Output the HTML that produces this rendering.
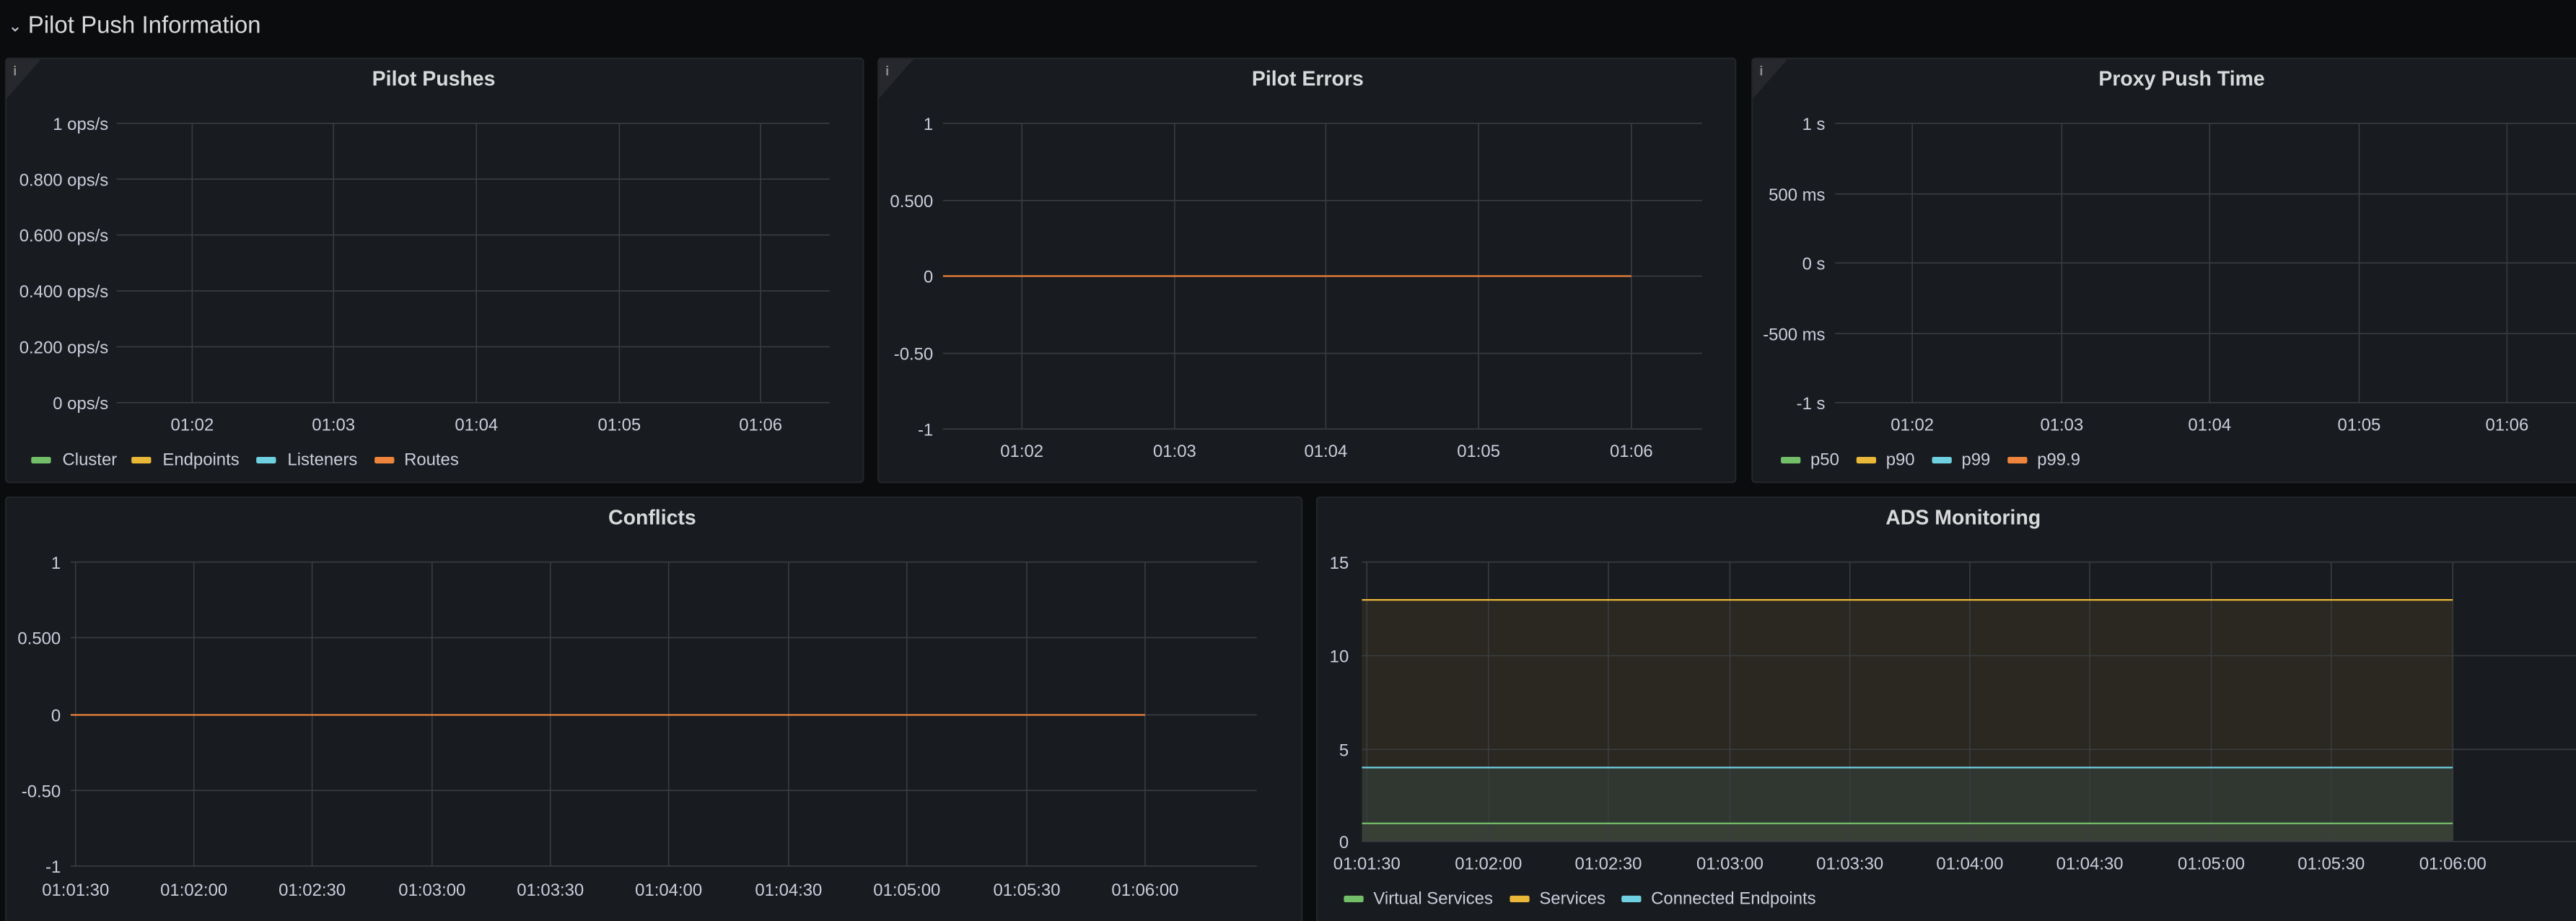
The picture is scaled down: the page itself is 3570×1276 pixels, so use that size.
<!DOCTYPE html>
<html><head><meta charset="utf-8"><style>
html,body{margin:0;padding:0;background:#0b0c0e;width:3570px;height:1276px;overflow:hidden}
svg{display:block}
text{font-family:"Liberation Sans",sans-serif;fill:#ccccdc}
.t{font-size:12.5px;font-weight:bold;text-anchor:middle;fill:#d8d9da}
.y{font-size:10.5px;text-anchor:end}
.x{font-size:10.5px;text-anchor:middle}
.l{font-size:10.5px}
.g line{stroke:#3a3c41;stroke-width:0.7}
.p{fill:#181b1f;stroke:#25272c;stroke-width:0.8}
</style></head><body>
<svg width="3570" height="1276" viewBox="0 0 1568 560.4" preserveAspectRatio="none">
<rect width="1568" height="560.4" fill="#0b0c0e"/>
<text x="5" y="19" style="font-size:10px">⌄</text>
<text x="17" y="20" style="font-size:14.5px;fill:#d8d9da">Pilot Push Information</text>

<!-- Panel 1 -->
<rect class="p" x="3.5" y="35.5" width="522" height="258" rx="2"/>
<path d="M4 36 L25 36 L4 60 Z" fill="#26282d"/>
<text x="8" y="46" style="font-size:8px;fill:#8e8e8e;font-weight:bold">i</text>
<text class="t" x="264" y="52">Pilot Pushes</text>
<g class="g">
<line x1="71" y1="75" x2="505" y2="75"/><line x1="71" y1="109" x2="505" y2="109"/><line x1="71" y1="143" x2="505" y2="143"/><line x1="71" y1="177" x2="505" y2="177"/><line x1="71" y1="211" x2="505" y2="211"/><line x1="71" y1="245" x2="505" y2="245"/>
<line x1="117" y1="75" x2="117" y2="245"/><line x1="203" y1="75" x2="203" y2="245"/><line x1="290" y1="75" x2="290" y2="245"/><line x1="377" y1="75" x2="377" y2="245"/><line x1="463" y1="75" x2="463" y2="245"/>
</g>
<text class="y" x="66" y="79">1 ops/s</text><text class="y" x="66" y="113">0.800 ops/s</text><text class="y" x="66" y="147">0.600 ops/s</text><text class="y" x="66" y="181">0.400 ops/s</text><text class="y" x="66" y="215">0.200 ops/s</text><text class="y" x="66" y="249">0 ops/s</text>
<text class="x" x="117" y="262">01:02</text><text class="x" x="203" y="262">01:03</text><text class="x" x="290" y="262">01:04</text><text class="x" x="377" y="262">01:05</text><text class="x" x="463" y="262">01:06</text>
<rect x="19" y="278" width="12" height="4" rx="1" fill="#73bf69"/><text class="l" x="38" y="283">Cluster</text>
<rect x="80" y="278" width="12" height="4" rx="1" fill="#eab839"/><text class="l" x="99" y="283">Endpoints</text>
<rect x="156" y="278" width="12" height="4" rx="1" fill="#6ed0e0"/><text class="l" x="175" y="283">Listeners</text>
<rect x="228" y="278" width="12" height="4" rx="1" fill="#ef843c"/><text class="l" x="246" y="283">Routes</text>

<!-- Panel 2 -->
<rect class="p" x="534.5" y="35.5" width="522" height="258" rx="2"/>
<path d="M535 36 L556 36 L535 60 Z" fill="#26282d"/>
<text x="539" y="46" style="font-size:8px;fill:#8e8e8e;font-weight:bold">i</text>
<text class="t" x="796" y="52">Pilot Errors</text>
<g class="g">
<line x1="574" y1="75" x2="1036" y2="75"/><line x1="574" y1="122" x2="1036" y2="122"/><line x1="574" y1="168" x2="1036" y2="168"/><line x1="574" y1="215" x2="1036" y2="215"/><line x1="574" y1="261" x2="1036" y2="261"/>
<line x1="622" y1="75" x2="622" y2="261"/><line x1="715" y1="75" x2="715" y2="261"/><line x1="807" y1="75" x2="807" y2="261"/><line x1="900" y1="75" x2="900" y2="261"/><line x1="993" y1="75" x2="993" y2="261"/>
</g>
<line x1="574" y1="168" x2="993" y2="168" stroke="#ef843c" stroke-width="1"/>
<text class="y" x="568" y="79">1</text><text class="y" x="568" y="126">0.500</text><text class="y" x="568" y="172">0</text><text class="y" x="568" y="219">-0.50</text><text class="y" x="568" y="265">-1</text>
<text class="x" x="622" y="278">01:02</text><text class="x" x="715" y="278">01:03</text><text class="x" x="807" y="278">01:04</text><text class="x" x="900" y="278">01:05</text><text class="x" x="993" y="278">01:06</text>

<!-- Panel 3 -->
<rect class="p" x="1066.5" y="35.5" width="510" height="258" rx="2"/>
<path d="M1067 36 L1088 36 L1067 60 Z" fill="#26282d"/>
<text x="1071" y="46" style="font-size:8px;fill:#8e8e8e;font-weight:bold">i</text>
<text class="t" x="1328" y="52">Proxy Push Time</text>
<g class="g">
<line x1="1117" y1="75" x2="1568" y2="75"/><line x1="1117" y1="118" x2="1568" y2="118"/><line x1="1117" y1="160" x2="1568" y2="160"/><line x1="1117" y1="203" x2="1568" y2="203"/><line x1="1117" y1="245" x2="1568" y2="245"/>
<line x1="1164" y1="75" x2="1164" y2="245"/><line x1="1255" y1="75" x2="1255" y2="245"/><line x1="1345" y1="75" x2="1345" y2="245"/><line x1="1436" y1="75" x2="1436" y2="245"/><line x1="1526" y1="75" x2="1526" y2="245"/>
</g>
<text class="y" x="1111" y="79">1 s</text><text class="y" x="1111" y="122">500 ms</text><text class="y" x="1111" y="164">0 s</text><text class="y" x="1111" y="207">-500 ms</text><text class="y" x="1111" y="249">-1 s</text>
<text class="x" x="1164" y="262">01:02</text><text class="x" x="1255" y="262">01:03</text><text class="x" x="1345" y="262">01:04</text><text class="x" x="1436" y="262">01:05</text><text class="x" x="1526" y="262">01:06</text>
<rect x="1084" y="278" width="12" height="4" rx="1" fill="#73bf69"/><text class="l" x="1102" y="283">p50</text>
<rect x="1130" y="278" width="12" height="4" rx="1" fill="#eab839"/><text class="l" x="1148" y="283">p90</text>
<rect x="1176" y="278" width="12" height="4" rx="1" fill="#6ed0e0"/><text class="l" x="1194" y="283">p99</text>
<rect x="1222" y="278" width="12" height="4" rx="1" fill="#ef843c"/><text class="l" x="1240" y="283">p99.9</text>

<!-- Conflicts -->
<rect class="p" x="3.5" y="302.5" width="789" height="262" rx="2"/>
<text class="t" x="397" y="319">Conflicts</text>
<g class="g">
<line x1="43" y1="342" x2="765" y2="342"/><line x1="43" y1="388" x2="765" y2="388"/><line x1="43" y1="435" x2="765" y2="435"/><line x1="43" y1="481" x2="765" y2="481"/><line x1="43" y1="527" x2="765" y2="527"/>
<line x1="46" y1="342" x2="46" y2="527"/><line x1="118" y1="342" x2="118" y2="527"/><line x1="190" y1="342" x2="190" y2="527"/><line x1="263" y1="342" x2="263" y2="527"/><line x1="335" y1="342" x2="335" y2="527"/><line x1="407" y1="342" x2="407" y2="527"/><line x1="480" y1="342" x2="480" y2="527"/><line x1="552" y1="342" x2="552" y2="527"/><line x1="625" y1="342" x2="625" y2="527"/><line x1="697" y1="342" x2="697" y2="527"/>
</g>
<line x1="43" y1="435" x2="697" y2="435" stroke="#ef843c" stroke-width="1"/>
<text class="y" x="37" y="346">1</text><text class="y" x="37" y="392">0.500</text><text class="y" x="37" y="439">0</text><text class="y" x="37" y="485">-0.50</text><text class="y" x="37" y="531">-1</text>
<text class="x" x="46" y="545">01:01:30</text><text class="x" x="118" y="545">01:02:00</text><text class="x" x="190" y="545">01:02:30</text><text class="x" x="263" y="545">01:03:00</text><text class="x" x="335" y="545">01:03:30</text><text class="x" x="407" y="545">01:04:00</text><text class="x" x="480" y="545">01:04:30</text><text class="x" x="552" y="545">01:05:00</text><text class="x" x="625" y="545">01:05:30</text><text class="x" x="697" y="545">01:06:00</text>

<!-- ADS -->
<rect class="p" x="801.5" y="302.5" width="780" height="262" rx="2"/>
<text class="t" x="1195" y="319">ADS Monitoring</text>
<rect x="829" y="365" width="664" height="102" fill="#2a2820"/>
<rect x="829" y="467" width="664" height="34" fill="#303731"/>
<rect x="829" y="501" width="664" height="11" fill="#384036"/>
<g class="g">
<line x1="829" y1="342" x2="1568" y2="342"/><line x1="829" y1="399" x2="1568" y2="399"/><line x1="829" y1="456" x2="1568" y2="456"/><line x1="829" y1="512" x2="1568" y2="512"/>
<line x1="832" y1="342" x2="832" y2="512"/><line x1="906" y1="342" x2="906" y2="512"/><line x1="979" y1="342" x2="979" y2="512"/><line x1="1053" y1="342" x2="1053" y2="512"/><line x1="1126" y1="342" x2="1126" y2="512"/><line x1="1199" y1="342" x2="1199" y2="512"/><line x1="1272" y1="342" x2="1272" y2="512"/><line x1="1346" y1="342" x2="1346" y2="512"/><line x1="1419" y1="342" x2="1419" y2="512"/><line x1="1493" y1="342" x2="1493" y2="512"/>
</g>
<line x1="829" y1="365" x2="1493" y2="365" stroke="#eab839" stroke-width="1"/>
<line x1="829" y1="467" x2="1493" y2="467" stroke="#6ed0e0" stroke-width="1"/>
<line x1="829" y1="501" x2="1493" y2="501" stroke="#73bf69" stroke-width="1"/>
<text class="y" x="821" y="346">15</text><text class="y" x="821" y="403">10</text><text class="y" x="821" y="460">5</text><text class="y" x="821" y="516">0</text>
<text class="x" x="832" y="529">01:01:30</text><text class="x" x="906" y="529">01:02:00</text><text class="x" x="979" y="529">01:02:30</text><text class="x" x="1053" y="529">01:03:00</text><text class="x" x="1126" y="529">01:03:30</text><text class="x" x="1199" y="529">01:04:00</text><text class="x" x="1272" y="529">01:04:30</text><text class="x" x="1346" y="529">01:05:00</text><text class="x" x="1419" y="529">01:05:30</text><text class="x" x="1493" y="529">01:06:00</text>
<rect x="818" y="545" width="12" height="4" rx="1" fill="#73bf69"/><text class="l" x="836" y="550">Virtual Services</text>
<rect x="919" y="545" width="12" height="4" rx="1" fill="#eab839"/><text class="l" x="937" y="550">Services</text>
<rect x="987" y="545" width="12" height="4" rx="1" fill="#6ed0e0"/><text class="l" x="1005" y="550">Connected Endpoints</text>
</svg>
</body></html>
